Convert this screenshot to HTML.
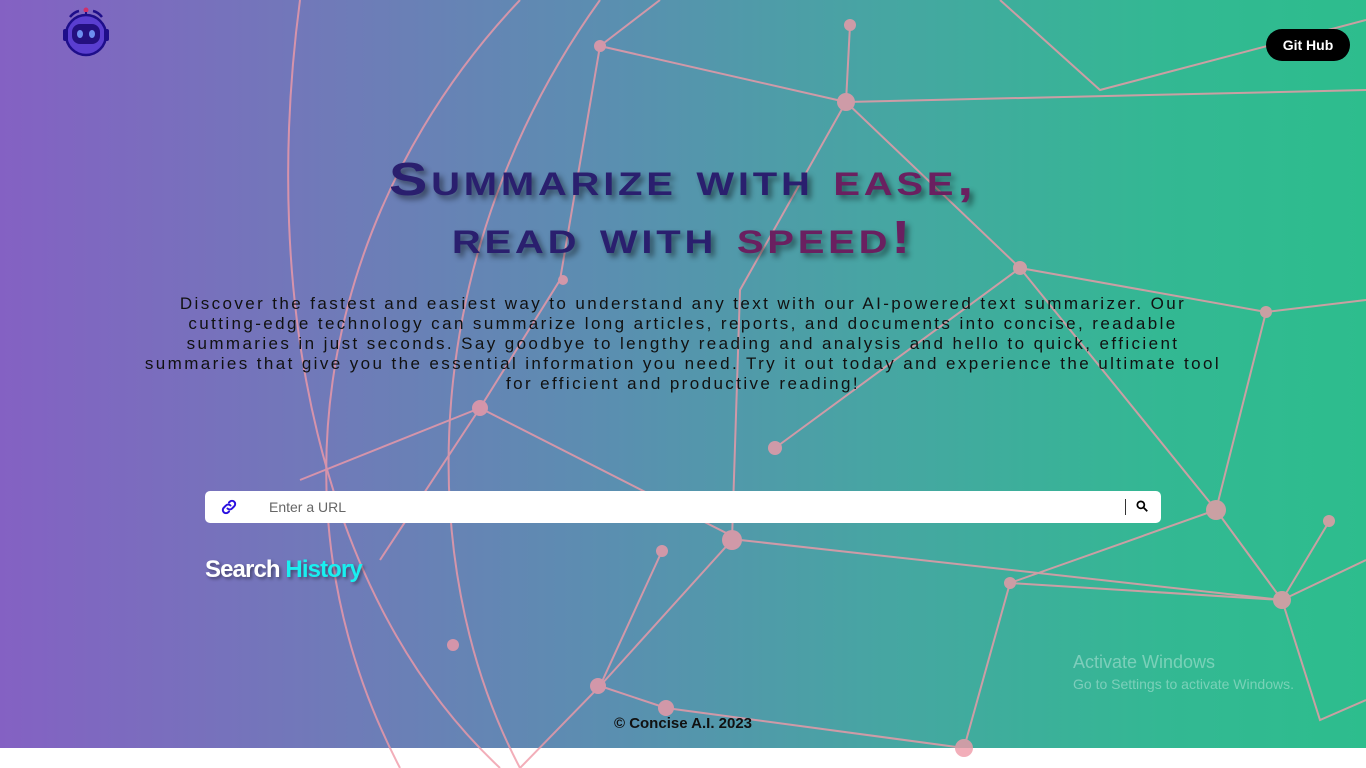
<!DOCTYPE html>
<html><head><meta charset="utf-8"><style>
*{margin:0;padding:0;box-sizing:border-box}
body{width:1366px;height:768px;overflow:hidden;position:relative;font-family:"Liberation Sans",sans-serif;background:#fff}
.bg{position:absolute;left:0;top:0;width:1366px;height:748px;background:linear-gradient(90deg,#8461c3 0%,#6f7bb8 25%,#5a8fb0 45%,#46a6a2 65%,#33b893 85%,#2dbd8d 100%)}
svg.net{position:absolute;left:0;top:0}
.logo{position:absolute;left:60px;top:6px}
.git{position:absolute;left:1266px;top:29px;width:84px;height:32px;background:#000;color:#fff;border-radius:16px;font-size:14px;font-weight:bold;text-align:center;line-height:32px}
h1{position:absolute;left:0;width:1366px;top:150px;text-align:center;font-size:46px;line-height:58px;font-variant:small-caps;font-weight:bold;letter-spacing:3px;transform:scaleX(1.25);transform-origin:683px 0;color:#2a1f6e;text-shadow:3px 4px 5px rgba(0,0,0,.45)}
h1 .r{color:#6a2060}
.desc{position:absolute;left:0;width:1366px;top:294px;text-align:center;font-size:17px;line-height:20px;letter-spacing:2.4px;color:#111;white-space:nowrap}
.search{position:absolute;left:205px;top:491px;width:956px;height:32px;background:#fff;border-radius:5px}
.search span{position:absolute;left:64px;top:8px;font-size:14px;color:#666}
.sh{position:absolute;left:205px;top:556px;font-size:24px;font-weight:bold;color:#fff;text-shadow:2px 2px 3px rgba(0,0,0,.4);letter-spacing:-0.9px}
.sh b{color:#19f0f0}
.foot{position:absolute;left:0;width:1366px;top:715px;text-align:center;font-size:15px;font-weight:bold;color:#111}
.win{position:absolute;left:1073px;top:652px;color:rgba(255,255,255,.35);font-size:18px}
.win small{display:block;font-size:14px;margin-top:3px}
</style></head><body>
<div class="bg"></div>
<svg class="net" width="1366" height="768" stroke="#f09aa8" stroke-width="2" fill="none" opacity=".8">
<path d="M520 0 C330 200 260 500 400 768"/>
<path d="M600 0 C420 250 410 560 520 768"/>
<path d="M660 0 L600 46 L560 280 L480 408 L380 560"/>
<path d="M850 25 L846 102 L740 290 L732 540 L600 686 L520 768"/>
<path d="M846 102 L1366 90"/><path d="M600 46 L846 102"/>
<path d="M1020 268 L1266 312 L1366 300"/><path d="M846 102 L1020 268 L775 448"/>
<path d="M1000 0 L1100 90 L1366 20"/><path d="M1266 312 L1216 510 L1010 583 L1282 600 L1366 560"/>
<path d="M1216 510 L1282 600 L1320 720 L1366 700"/><path d="M1020 268 L1216 510"/>
<path d="M480 408 L740 540 L1282 600"/><path d="M480 408 L300 480"/>
<path d="M662 551 L600 686 L666 708 L964 748"/><path d="M1010 583 L964 748"/>
<path d="M1330 520 L1282 600"/><path d="M300 0 C260 300 320 600 500 768"/>
<g fill="#f09aa8" stroke="none">
<circle cx="846" cy="102" r="9"/><circle cx="600" cy="46" r="6"/><circle cx="1020" cy="268" r="7"/>
<circle cx="1266" cy="312" r="6"/><circle cx="1216" cy="510" r="10"/><circle cx="732" cy="540" r="10"/>
<circle cx="662" cy="551" r="6"/><circle cx="1282" cy="600" r="9"/><circle cx="1010" cy="583" r="6"/>
<circle cx="598" cy="686" r="8"/><circle cx="666" cy="708" r="8"/><circle cx="964" cy="748" r="9"/>
<circle cx="480" cy="408" r="8"/><circle cx="775" cy="448" r="7"/><circle cx="850" cy="25" r="6"/>
<circle cx="1329" cy="521" r="6"/><circle cx="453" cy="645" r="6"/><circle cx="563" cy="280" r="5"/>
</g></svg>
<svg class="logo" width="52" height="52" viewBox="0 0 52 50">
<circle cx="26" cy="28" r="20" fill="#5a3ed0" stroke="#1e0e8a" stroke-width="2.5"/>
<rect x="12" y="17" width="28" height="20" rx="8" fill="#241080"/>
<ellipse cx="20" cy="27" rx="3" ry="4" fill="#6d8ef0"/><ellipse cx="32" cy="27" rx="3" ry="4" fill="#6d8ef0"/>
<circle cx="26" cy="3" r="2.5" fill="#d0306a"/><line x1="26" y1="5" x2="26" y2="9" stroke="#1e0e8a" stroke-width="2"/>
<rect x="3" y="22" width="5" height="12" rx="2" fill="#1e0e8a"/><rect x="44" y="22" width="5" height="12" rx="2" fill="#1e0e8a"/>
<path d="M10 10 Q14 5 19 4 M42 10 Q38 5 33 4" stroke="#1e0e8a" stroke-width="2.5" fill="none"/>
</svg>
<div class="git">Git Hub</div>
<h1>Summarize with <span class="r">ease,</span><br>read with <span class="r">speed!</span></h1>
<div class="desc">Discover the fastest and easiest way to understand any text with our AI-powered text summarizer. Our<br>cutting-edge technology can summarize long articles, reports, and documents into concise, readable<br>summaries in just seconds. Say goodbye to lengthy reading and analysis and hello to quick, efficient<br>summaries that give you the essential information you need. Try it out today and experience the ultimate tool<br>for efficient and productive reading!</div>
<div class="search">
<svg style="position:absolute;left:15px;top:7px" width="18" height="18" viewBox="0 0 24 24" fill="none" stroke="#2a10e0" stroke-width="2.6" stroke-linecap="round"><path d="M10 14a4 4 0 0 0 6 0l3-3a4 4 0 0 0-6-6l-1 1"/><path d="M14 10a4 4 0 0 0-6 0l-3 3a4 4 0 0 0 6 6l1-1"/></svg>
<span>Enter a URL</span>
<div style="position:absolute;left:920px;top:8px;width:1px;height:16px;background:#333"></div>
<svg style="position:absolute;left:930px;top:8px" width="14" height="14" viewBox="0 0 24 24" fill="none" stroke="#000" stroke-width="3"><circle cx="10" cy="10" r="6"/><path d="M15 15l6 6"/></svg>
</div>
<div class="sh">Search <b>History</b></div>
<div class="win">Activate Windows<small>Go to Settings to activate Windows.</small></div>
<div class="foot">© Concise A.I. 2023</div>
</body></html>
